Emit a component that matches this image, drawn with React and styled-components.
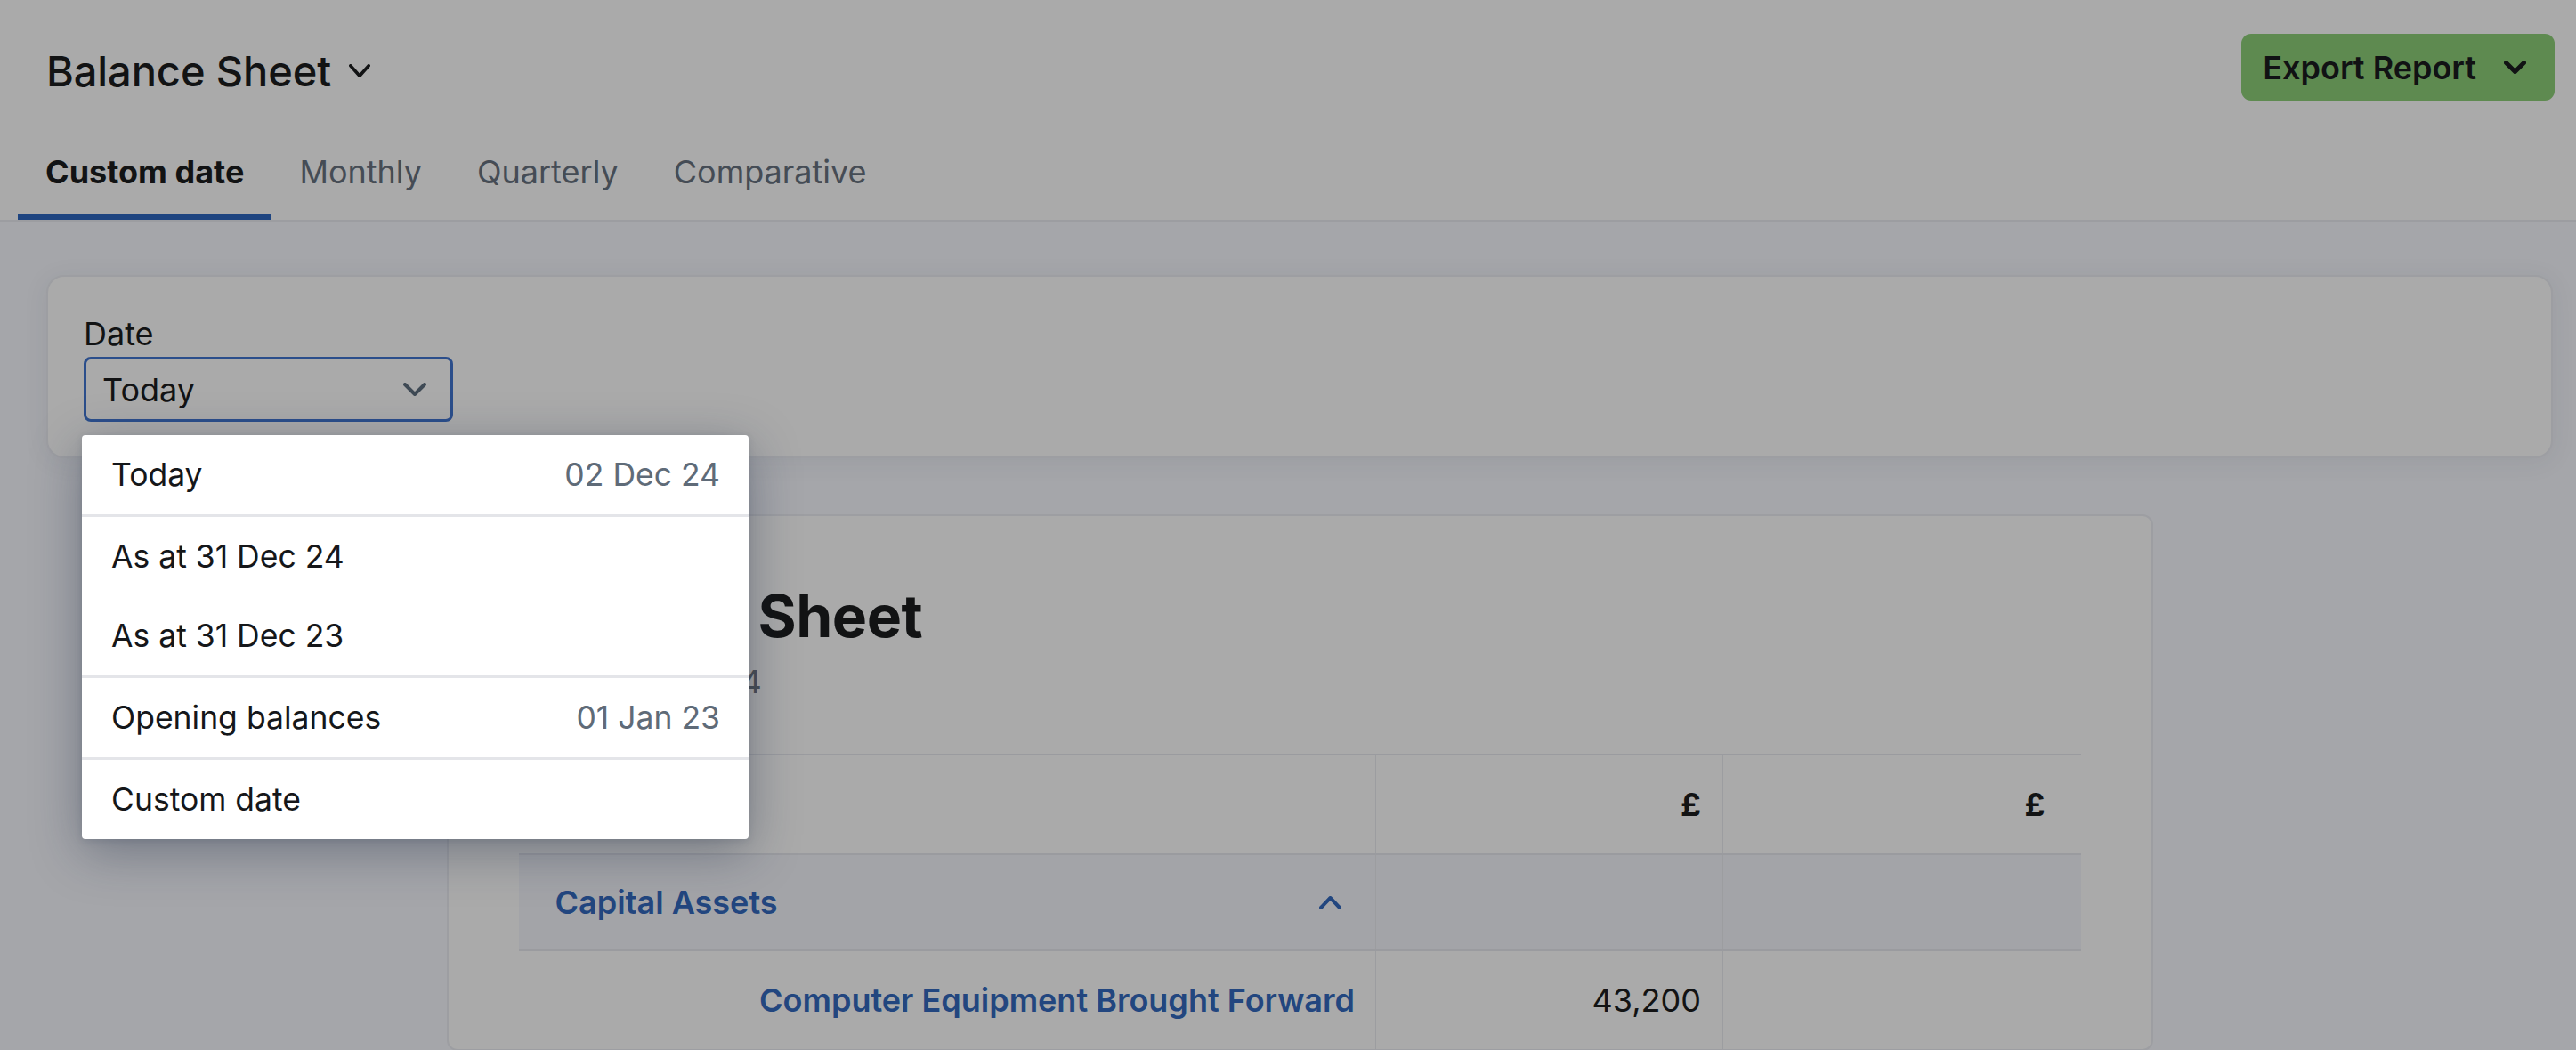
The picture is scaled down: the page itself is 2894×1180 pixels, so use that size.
import React from 'react';
import styled, { createGlobalStyle } from 'styled-components';

const GlobalStyle = createGlobalStyle`
  html, body { margin: 0; padding: 0; height: 100%; overflow: hidden; }
  body {
    background: #a5a6aa;
    font-family: Inter, "Noto Sans", "Liberation Sans", sans-serif;
    color: #121314;
  }
  * { box-sizing: border-box; }
`;

const Header = styled.header`
  background: #aaaaaa;
  border-bottom: 2px solid #9c9da1;
`;

const TopRow = styled.div`
  display: flex;
  align-items: center;
  justify-content: space-between;
  height: 113px;
  padding: 38px 24px 0 52px;
`;

const Title = styled.h1`
  display: flex;
  align-items: center;
  gap: 20px;
  margin: 8px 0 0;
  font-size: 47px;
  font-weight: 500;
  line-height: 1;
  letter-spacing: -0.1px;
`;

const ExportButton = styled.button`
  display: flex;
  align-items: center;
  gap: 31px;
  height: 75px;
  padding: 0 32px 0 24px;
  border: none;
  border-radius: 11px;
  background: #5e8a50;
  color: #111214;
  font-family: inherit;
  font-size: 36px;
  font-weight: 600;
`;

const Tabs = styled.nav`
  display: flex;
  padding-left: 20px;
`;

const Tab = styled.div`
  padding: 58px 31px 25px;
  line-height: 44px;
  font-size: 36px;
  font-weight: ${p => (p.$active ? 700 : 400)};
  color: ${p => (p.$active ? '#121314' : '#454c55')};
  border-bottom: 7px solid ${p => (p.$active ? '#1e4480' : 'transparent')};
`;

const Main = styled.main`
  padding: 60px 26px 0 52px;
`;

const FilterCard = styled.section`
  background: #aaaaaa;
  border: 2px solid #9d9ea2;
  border-radius: 20px;
  padding: 42px 40px 39px;
  box-shadow: 0 4px 28px rgba(40, 50, 70, 0.08);
`;

const Label = styled.div`
  font-size: 36px;
  line-height: 44px;
`;

const Field = styled.div`
  position: relative;
  width: 415px;
  margin-top: 4px;
`;

const SelectBox = styled.div`
  display: flex;
  align-items: center;
  justify-content: space-between;
  height: 73px;
  padding: 0 27px 0 18px;
  border: 3px solid #2b4e8b;
  border-radius: 8px;
  font-size: 36px;
`;

const Menu = styled.div`
  position: absolute;
  top: calc(100% + 15px);
  left: -2px;
  z-index: 10;
  width: 749px;
  background: #ffffff;
  border-radius: 4px;
  box-shadow: 0 14px 56px rgba(25, 40, 65, 0.38), 0 2px 8px rgba(25, 40, 65, 0.12);
  overflow: hidden;
`;

const MenuGroup = styled.div`
  & + & { border-top: 3px solid #e4e5e9; }
`;

const MenuItem = styled.div`
  display: flex;
  align-items: center;
  justify-content: space-between;
  height: 89px;
  padding: 0 32px 0 33px;
  font-size: 35.5px;
  color: #15171a;
`;

const MenuDate = styled.span`
  color: #5f6b78;
`;

const ReportCard = styled.section`
  width: 1917px;
  margin: 63px auto 0;
  background: #aaaaaa;
  border: 2px solid #9d9ea2;
  border-radius: 12px;
  padding: 72px 79px 0;
`;

const ReportTitle = styled.h2`
  margin: 0;
  font-size: 66px;
  font-weight: 700;
  line-height: 80px;
  letter-spacing: -0.5px;
`;

const ReportSub = styled.div`
  margin-top: 12px;
  font-size: 36px;
  line-height: 44px;
  color: #4a4f56;
`;

const Table = styled.table`
  width: 100%;
  margin-top: 59px;
  border-collapse: collapse;
  table-layout: fixed;
`;

const Row = styled.tr`
  background: ${p => (p.$group ? '#a3a4a8' : 'transparent')};
  border-top: 2px solid #9a9b9f;
  height: ${p => p.$h}px;
`;

const Cell = styled.td`
  padding: 0 ${p => p.$pr || 24}px 0 ${p => p.$pl || 24}px;
  font-size: 36px;
  text-align: ${p => p.$align || 'right'};
  font-weight: ${p => p.$weight || 400};
  color: ${p => (p.$link ? '#22467f' : '#121314')};
  & + & { border-left: 1px solid #9c9da0; }
`;

const GroupLabel = styled.div`
  display: flex;
  align-items: center;
  justify-content: space-between;
`;

const Chevron = ({ w, h, sw, color, up }) => (
  <svg width={w} height={h} viewBox={`0 0 ${w} ${h}`} fill="none">
    <polyline
      points={
        up
          ? `${sw / 2},${h - sw / 2} ${w / 2},${sw / 2} ${w - sw / 2},${h - sw / 2}`
          : `${sw / 2},${sw / 2} ${w / 2},${h - sw / 2} ${w - sw / 2},${sw / 2}`
      }
      stroke={color}
      strokeWidth={sw}
      strokeLinecap="round"
      strokeLinejoin="round"
    />
  </svg>
);

const menuGroups = [
  [{ label: 'Today', date: '02 Dec 24' }],
  [{ label: 'As at 31 Dec 24' }, { label: 'As at 31 Dec 23' }],
  [{ label: 'Opening balances', date: '01 Jan 23' }],
  [{ label: 'Custom date' }],
];

const tabs = ['Custom date', 'Monthly', 'Quarterly', 'Comparative'];

export default function App() {
  return (
    <>
      <GlobalStyle />
      <Header>
        <TopRow>
          <Title>
            Balance Sheet
            <Chevron w={24} h={15} sw={3.5} color="#121314" />
          </Title>
          <ExportButton>
            Export Report
            <Chevron w={25} h={15} sw={5} color="#111214" />
          </ExportButton>
        </TopRow>
        <Tabs>
          {tabs.map((t, i) => (
            <Tab key={t} $active={i === 0}>{t}</Tab>
          ))}
        </Tabs>
      </Header>
      <Main>
        <FilterCard>
          <Label>Date</Label>
          <Field>
            <SelectBox>
              <span>Today</span>
              <Chevron w={26} h={15} sw={4} color="#3f4a55" />
            </SelectBox>
            <Menu>
              {menuGroups.map((g, gi) => (
                <MenuGroup key={gi}>
                  {g.map(it => (
                    <MenuItem key={it.label}>
                      <span>{it.label}</span>
                      {it.date && <MenuDate>{it.date}</MenuDate>}
                    </MenuItem>
                  ))}
                </MenuGroup>
              ))}
            </Menu>
          </Field>
        </FilterCard>
        <ReportCard>
          <ReportTitle>Balance Sheet</ReportTitle>
          <ReportSub>As at 02 Dec 24</ReportSub>
          <Table>
            <colgroup>
              <col style={{ width: '963px' }} />
              <col style={{ width: '390px' }} />
              <col />
            </colgroup>
            <tbody>
              <Row $h={112}>
                <Cell />
                <Cell $weight={700}>£</Cell>
                <Cell $weight={700} $pr={40}>£</Cell>
              </Row>
              <Row $h={108} $group>
                <Cell $align="left" $pl={41} $pr={38} $weight={600} $link>
                  <GroupLabel>
                    <span>Capital Assets</span>
                    <Chevron w={25} h={15} sw={4} color="#22467f" up />
                  </GroupLabel>
                </Cell>
                <Cell />
                <Cell />
              </Row>
              <Row $h={111}>
                <Cell $pr={23} $weight={600} $link>Computer Equipment Brought Forward</Cell>
                <Cell>43,200</Cell>
                <Cell $pr={40} />
              </Row>
            </tbody>
          </Table>
        </ReportCard>
      </Main>
    </>
  );
}
